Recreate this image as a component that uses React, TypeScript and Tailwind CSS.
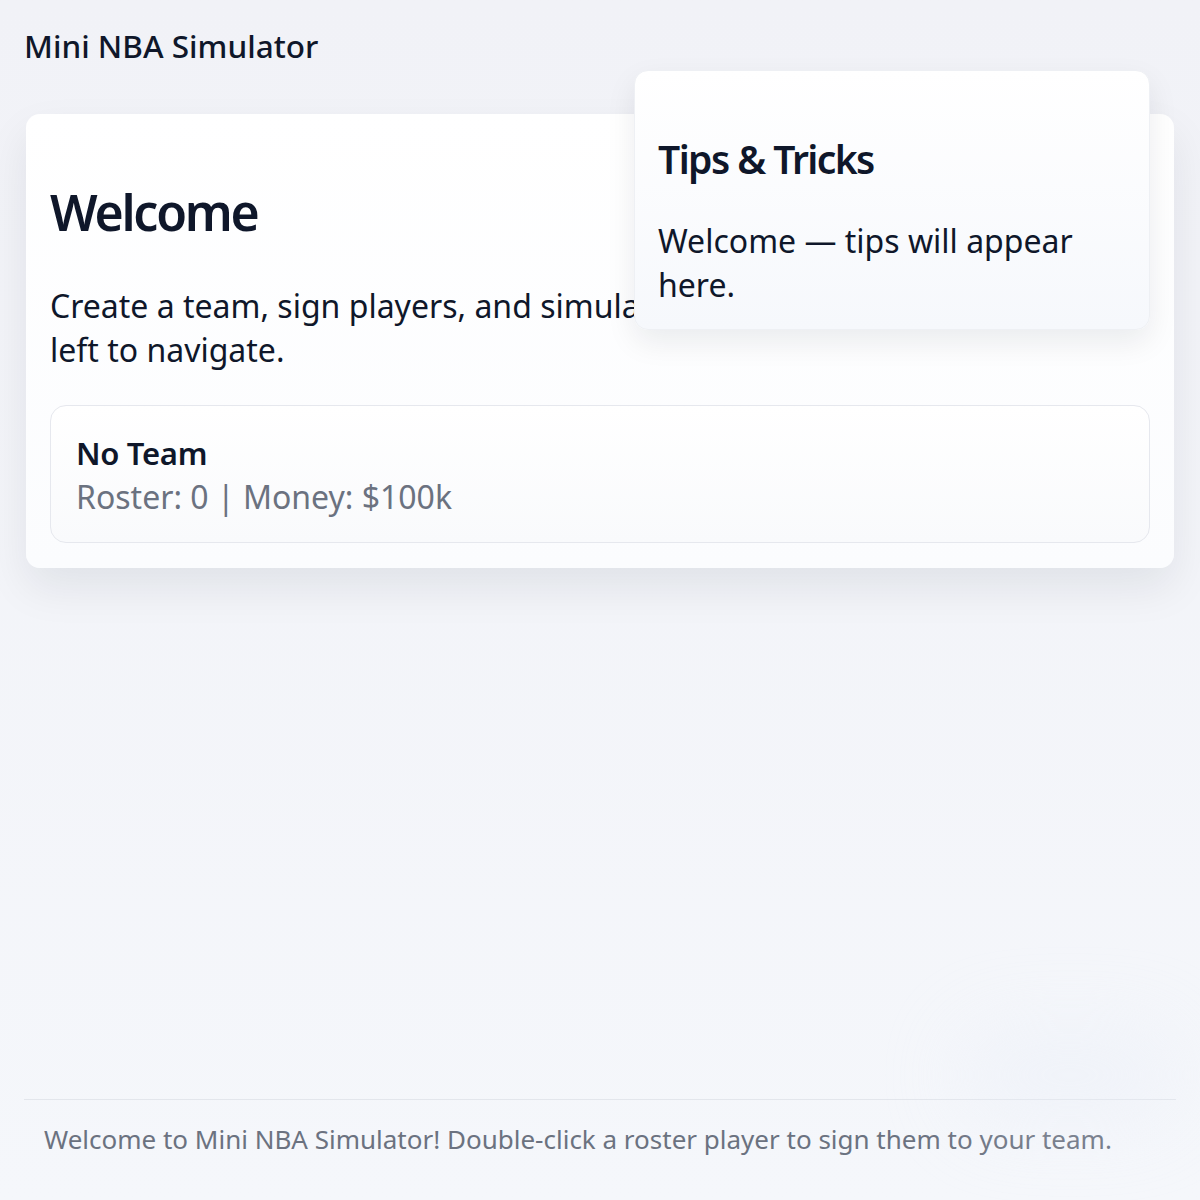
import React from 'react';

const FONT = { fontFamily: '"Noto Sans", "Open Sans", sans-serif' };

function TeamSummary() {
  return (
    <div className="rounded-2xl border border-[#e6e8ee] bg-gradient-to-b from-white to-[#f9fafc] px-[25px] pb-[23px] pt-[25px]">
      <p className="text-[31px] font-semibold leading-[44px] tracking-[-0.01em] text-[#0f172a]">No Team</p>
      <p className="text-[32px] leading-[44px] text-[#6b7280]">Roster: 0 | Money: $100k</p>
    </div>
  );
}

function TipsPanel() {
  return (
    <aside className="absolute left-[634px] top-[70px] w-[516px] rounded-[14px] border border-[#eef0f4] bg-gradient-to-b from-white to-[#f6f8fc] px-[23px] pb-[22px] pt-[62px] shadow-[0_12px_30px_rgba(15,23,42,0.08)]">
      <h2 className="text-[39px] font-semibold leading-[52px] tracking-[-0.04em] text-[#0f172a]">Tips &amp; Tricks</h2>
      <p className="mt-[34px] text-[32px] leading-[44px] text-[#0f172a]">
        Welcome — tips will appear here.
      </p>
    </aside>
  );
}

export default function App() {
  return (
    <div
      className="relative flex min-h-[1200px] flex-col bg-gradient-to-b from-[#f1f2f7] to-[#f5f7fb] px-[24px]"
      style={FONT}
    >
      <header className="pt-[26px]">
        <h1 className="text-[31.5px] font-medium leading-[40px] text-[#0f172a]">Mini NBA Simulator</h1>
      </header>

      <main className="mt-[48px] flex-1">
        <section className="mx-[2px] rounded-[14px] bg-gradient-to-b from-white to-[#fbfcfe] px-[24px] pb-[25px] pt-[63px] shadow-[0_20px_44px_rgba(15,23,42,0.08)]">
          <h1 className="text-[50px] font-semibold leading-[70px] tracking-[-0.045em] text-[#0f172a]">Welcome</h1>
          <p className="mt-[37px] text-[32px] leading-[44px] text-[#0f172a]">
            Create a team, sign players, and simulate games. Use the menu on the left to navigate.
          </p>
          <div className="mt-[33px]">
            <TeamSummary />
          </div>
        </section>
      </main>

      <div className="pointer-events-none absolute left-[960px] top-[1030px] h-[90px] w-[220px] rounded-full bg-[#e8edf7] opacity-40 blur-2xl" />

      <footer className="border-t border-[#e3e6ec] px-[20px] pb-[43px] pt-[21px]">
        <p className="text-[26px] leading-[36px] text-[#6b7280]">
          Welcome to Mini NBA Simulator! Double-click a roster player to sign them to your team.
        </p>
      </footer>

      <TipsPanel />
    </div>
  );
}
